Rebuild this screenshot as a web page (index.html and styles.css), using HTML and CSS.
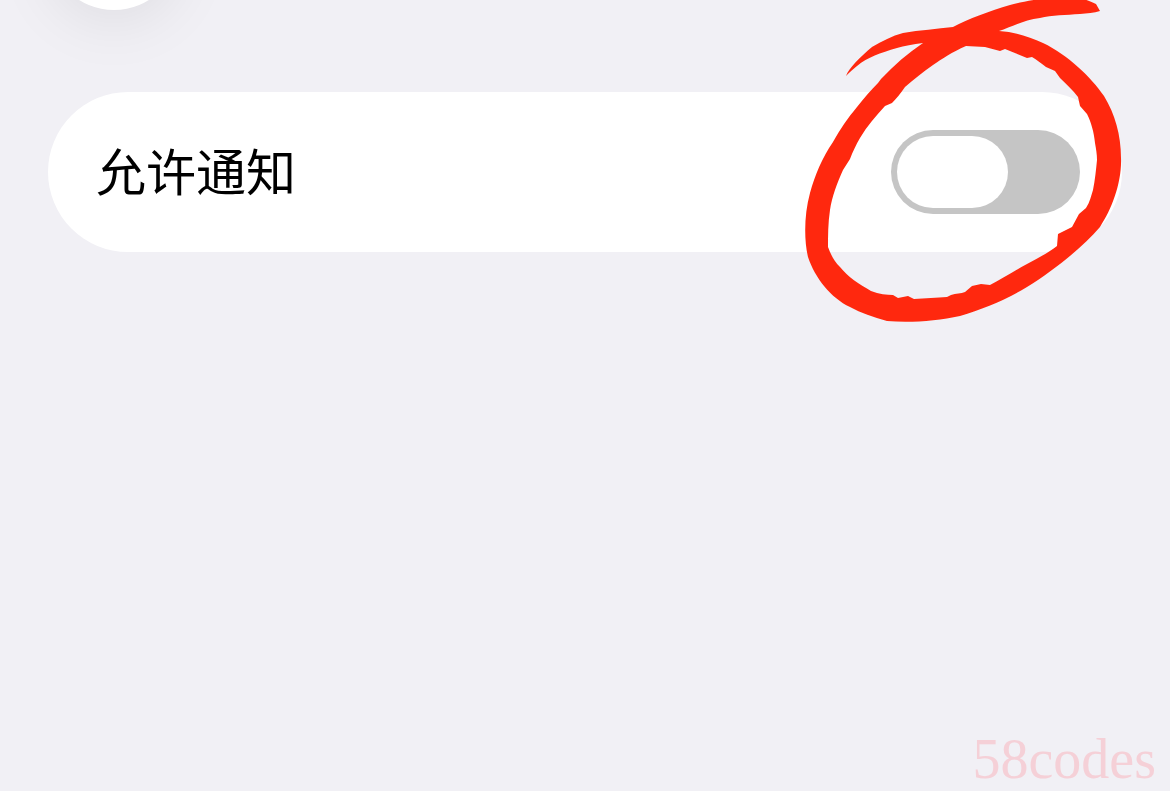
FILE: index.html
```
<!DOCTYPE html>
<html lang="zh-CN">
<head>
  <meta charset="UTF-8" />
  <meta name="viewport" content="width=device-width, initial-scale=1.0"/>
  <title>允许通知</title>
  <link rel="stylesheet" href="styles.css">
</head>
<body>
  <header class="top-bar">
    <button class="back-button" type="button" aria-label="返回"></button>
  </header>

  <main class="settings">
    <div class="setting-row">
      <label class="setting-label" for="allowNotify">允许通知</label>
      <input type="checkbox" role="switch" class="switch" id="allowNotify">
    </div>

    <!-- hand drawn circle over the switch -->
    <svg class="marker" viewBox="800 -4 326 330" aria-hidden="true">
      <path fill="#ff280e" fill-rule="evenodd" d="M846 76 C849 68 860 57 872 47 C882 41 892 36 903 33 C920 30 937 29 953 27 C968 19 990 11 1010 5 C1024 1 1048 -3 1070 -3 C1083 -2 1090 1 1096 4 L1100 11 C1094 13 1087 13 1080 14 C1066 15 1052 15 1040 18 C1024 20 1011 27 999 31 C1016 32 1030 37 1043 43 C1068 55 1091 77 1104 96 C1115 114 1121 135 1121 158 C1122 182 1112 209 1100 227 C1082 248 1053 271 1027 287 C1006 300 983 309 960 316 C937 321 910 323 887 321 C873 317 861 313 850 307 C831 298 815 278 808 257 C804 240 804 215 810 193 C815 175 822 158 833 142 C841 128 847 119 857 107 C864 98 871 90 878 83 L881 79 C894 65 908 53 923 43 C913 44 904 46 897 48 C880 53 868 57 857 66 C853 69 849 73 846 76 Z
      M966 46 C952 52 942 59 933 65 C923 72 914 79 905 87 C900 94 896 99 892 103 L885 106 C876 116 867 126 860 138 C856 145 853 151 850 159 L843 170 C837 183 832 197 830 210 C828 223 828 236 828 247 C831 255 834 261 840 267 C848 277 859 284 871 291 C879 294 887 295 893 295 L898 298 L908 296 L914 299 C925 298 937 298 947 297 L951 295 C956 293 961 294 965 292 L972 286 L981 284 L990 285 C1002 279 1014 271 1027 264 C1038 258 1048 253 1057 246 L1058 234 L1072 227 L1079 214 L1086 208 C1090 202 1091 196 1093 190 C1095 180 1096 170 1097 160 C1097 154 1096 149 1095 143 C1094 132 1091 122 1087 114 L1080 106 L1078 97 C1073 90 1066 84 1060 78 L1055 71 L1046 67 C1041 63 1037 60 1032 57 L1027 58 L1005 49 L1000 51 L985 47 Z"/>
    </svg>
  </main>

  <div class="watermark">58codes</div>
</body>
</html>
```
FILE: styles.css
```
* {
  box-sizing: border-box;
}
body {
  margin: 0;
  min-height: 100vh;
  display: flex;
  flex-direction: column;
  overflow: hidden;
  background-color: #f1f0f5;
  font-family: "Noto Sans CJK SC", sans-serif;
}
/* bar is scrolled up, only the lower edge of the button shows */
.top-bar {
  display: flex;
  padding: 0 48px 82px;
  margin-top: -122px;
}
.back-button {
  width: 132px;
  height: 132px;
  border: none;
  border-radius: 50%;
  background-color: white;
  box-shadow: 0 12px 60px rgba(0,0,0,0.08);
}
.settings {
  position: relative;
  padding: 0 48px;
}
.setting-row {
  display: flex;
  align-items: center;
  justify-content: space-between;
  min-height: 160px;
  padding: 0 42px 0 48px;
  border-radius: 80px;
  background-color: white;
}
.setting-label {
  padding-bottom: 6px;
  font-size: 50px;
  line-height: 72px;
  color: black;
}
.switch {
  appearance: none;
  display: flex;
  width: 189px;
  height: 84px;
  margin: 0;
  padding: 6px;
  border-radius: 42px;
  background-color: #c5c5c5;
  cursor: pointer;
}
.switch::before {
  content: "";
  width: 111px;
  height: 72px;
  border-radius: 36px;
  background-color: white;
}
.switch:checked {
  justify-content: flex-end;
  background-color: #34c759;
}
.marker {
  position: absolute;
  top: -96px;
  right: 44px;
  width: 326px;
  height: 330px;
  pointer-events: none;
}
.watermark {
  margin-top: auto;
  padding: 0 14px 2px 0;
  font-family: "Liberation Serif", serif;
  font-size: 56px;
  line-height: 60px;
  text-align: right;
  color: #f5d0d7;
}
```
